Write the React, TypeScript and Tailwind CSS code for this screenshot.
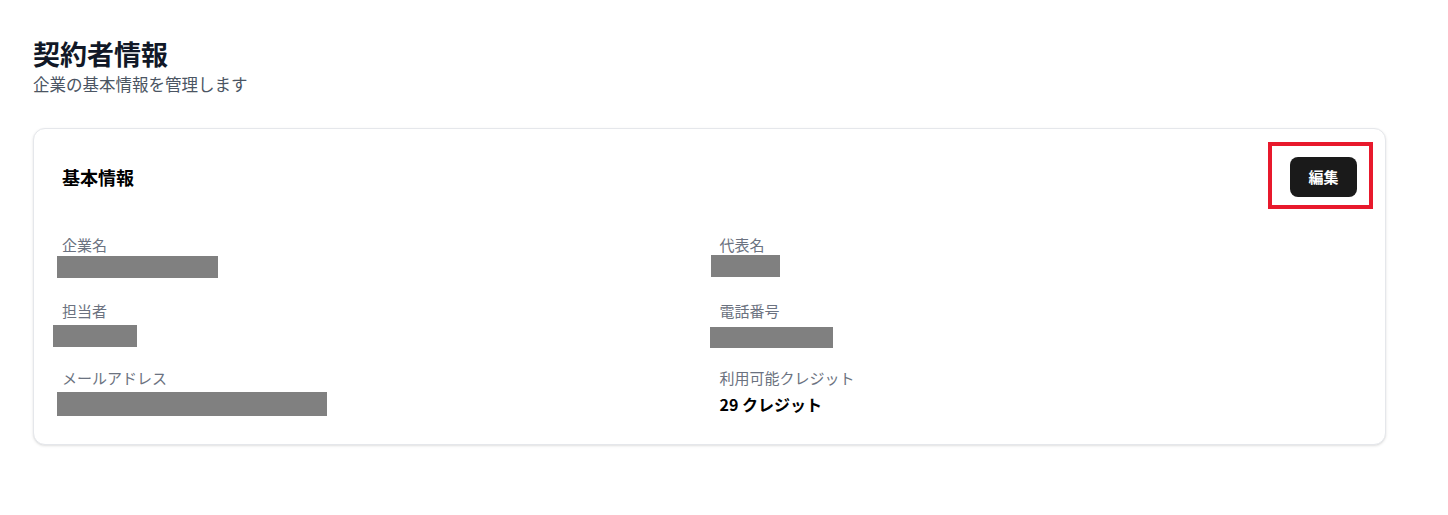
import React from 'react';

const Redacted: React.FC<{ className: string }> = ({ className }) => (
  <div className={`bg-[#808080] ${className}`} />
);

const App: React.FC = () => {
  return (
    <div className="min-h-screen bg-white pl-[33px] pr-[62px] pt-[36px] font-['Noto_Sans_CJK_JP','Noto_Sans',sans-serif]">
      <h1 className="text-[27px] leading-[36px] font-bold text-[#111827]">契約者情報</h1>
      <p className="mt-[1px] text-[16.5px] leading-[22px] text-[#4b5563]">企業の基本情報を管理します</p>

      <div className="mt-[33px] rounded-xl border border-[#e5e7eb] bg-white p-7 shadow-sm">
        <div className="flex items-center justify-between">
          <h2 className="text-[18px] font-bold text-black">基本情報</h2>
          <div className="relative">
            <button className="h-10 w-[67px] rounded-lg bg-[#1a1a1a] text-[15px] font-bold text-white">編集</button>
            <div className="pointer-events-none absolute -left-[22px] -right-[16px] -top-[15px] -bottom-[12px] border-[4px] border-[#e8192c]" />
          </div>
        </div>

        <div className="mt-[38px] grid grid-cols-2 gap-x-5 gap-y-5">
          <div>
            <p className="text-[15px] leading-5 text-[#6b7280]">企業名</p>
            <Redacted className="mt-[1px] mb-[3px] -ml-[5px] h-[22px] w-[161px]" />
          </div>
          <div>
            <p className="text-[15px] leading-5 text-[#6b7280]">代表名</p>
            <Redacted className="mt-0 -ml-[9px] h-[22px] w-[69px]" />
          </div>
          <div>
            <p className="text-[15px] leading-5 text-[#6b7280]">担当者</p>
            <Redacted className="mt-1 -ml-[9px] h-[22px] w-[84px]" />
          </div>
          <div>
            <p className="text-[15px] leading-5 text-[#6b7280]">電話番号</p>
            <Redacted className="mt-[6px] -ml-[10px] h-[21px] w-[123px]" />
          </div>
          <div>
            <p className="text-[15px] leading-5 text-[#6b7280]">メールアドレス</p>
            <Redacted className="mt-1 -ml-[5px] h-[24px] w-[270px]" />
          </div>
          <div>
            <p className="text-[15px] leading-5 text-[#6b7280]">利用可能クレジット</p>
            <p className="mt-1 text-[16px] leading-6 font-bold text-black">29 クレジット</p>
          </div>
        </div>
      </div>
    </div>
  );
};

export default App;
